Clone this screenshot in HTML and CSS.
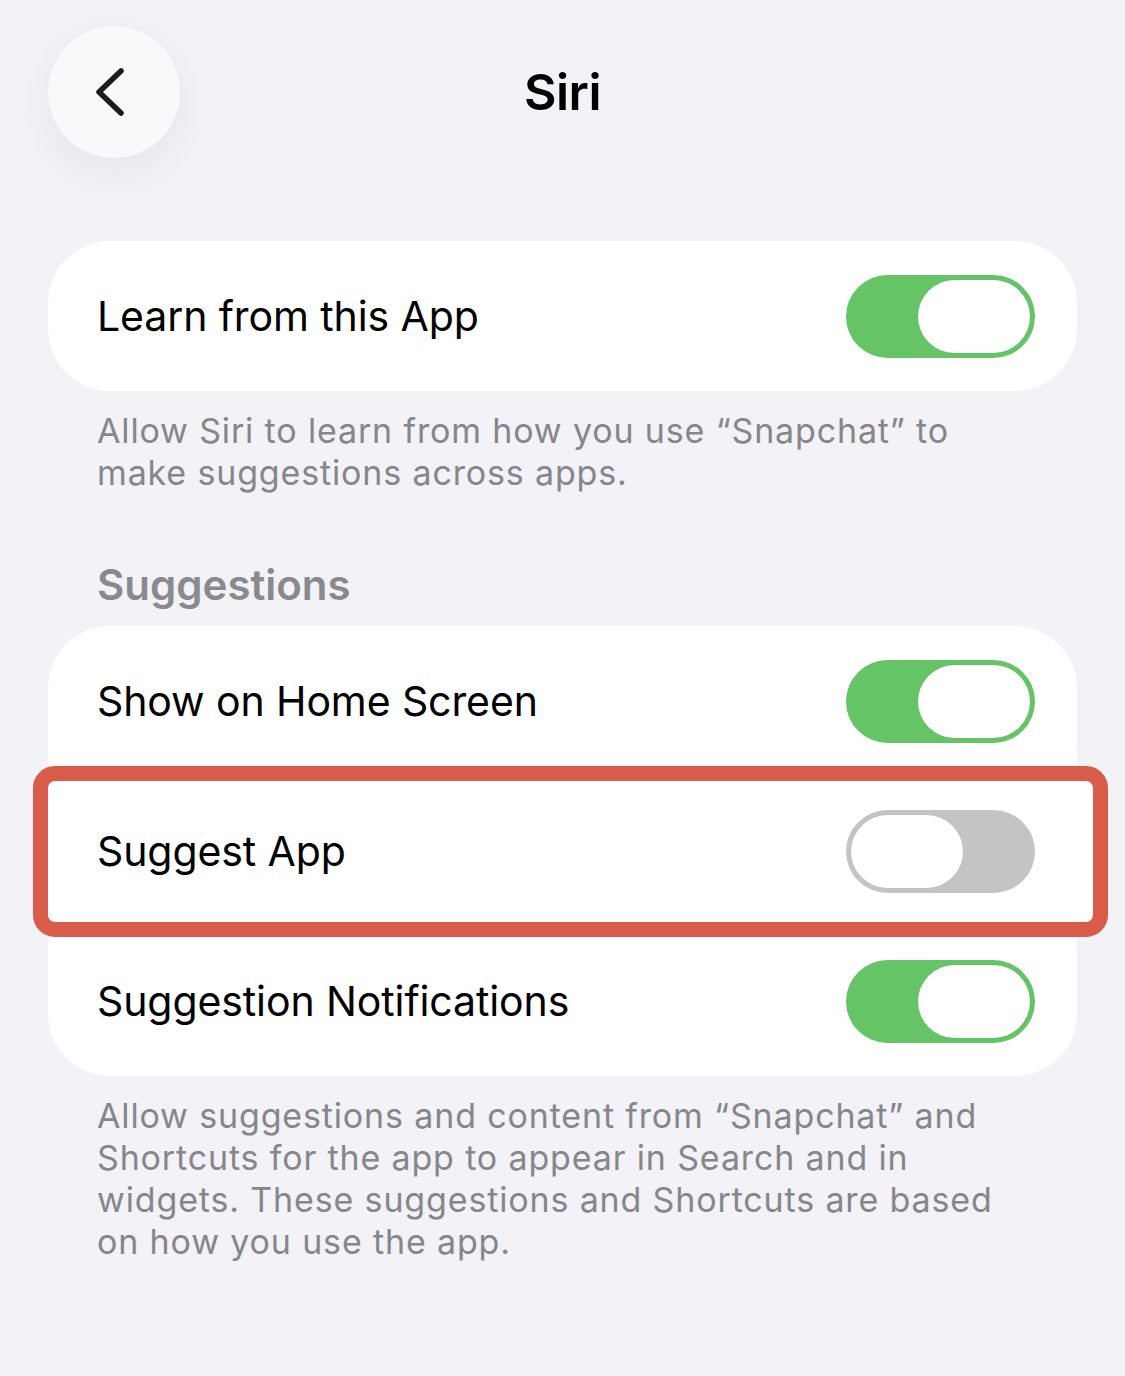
FILE: index.html
```html
<!DOCTYPE html>
<html lang="en">

<head>
  <meta charset="UTF-8">
  <meta name="viewport" content="width=device-width, initial-scale=1.0">
  <title>Siri</title>
  <link rel="stylesheet" href="styles.css">
</head>

<body>
  <div class="page">
    <div class="nav">
      <a class="back" href="javascript:;">
        <svg width="132" height="132" viewBox="0 0 132 132">
          <path d="M73 45 L51 66 L73 87" fill="none" stroke="#1c1c1e" stroke-width="5.5" stroke-linecap="round" stroke-linejoin="round" />
        </svg>
      </a>
      <h1>Siri</h1>
    </div>

    <div class="group">
      <div class="row">
        <span>Learn from this App</span>
        <span class="switch on"><i></i></span>
      </div>
    </div>
    <p class="note">Allow Siri to learn from how you use “Snapchat” to make suggestions across apps.</p>

    <h2>Suggestions</h2>
    <div class="group">
      <div class="row">
        <span>Show on Home Screen</span>
        <span class="switch on"><i></i></span>
      </div>
      <div class="row marked">
        <span>Suggest App</span>
        <span class="switch"><i></i></span>
      </div>
      <div class="row">
        <span>Suggestion Notifications</span>
        <span class="switch on"><i></i></span>
      </div>
    </div>
    <p class="note">Allow suggestions and content from “Snapchat” and Shortcuts for the app to appear in Search and in widgets. These suggestions and Shortcuts are based on how you use the app.</p>
  </div>
</body>

</html>
```

FILE: styles.css
```css
* {
  margin: 0;
  padding: 0;
  box-sizing: border-box;
}

body {
  background: #f2f2f7;
  font-family: Inter, "Noto Sans", sans-serif;
  color: #000;
}

.page {
  width: 1125px;
  min-height: 1376px;
  padding: 26px 48px 0;
}

/* 顶部导航 */
.nav {
  position: relative;
  height: 132px;
  display: flex;
  align-items: center;
  justify-content: center;
}

.nav .back {
  position: absolute;
  left: 0;
  top: 0;
  width: 132px;
  height: 132px;
  border-radius: 50%;
  background: #f9f9fb;
  box-shadow: 0 14px 50px rgba(0, 0, 0, 0.06);
  display: block;
}

.nav .back svg {
  display: block;
}

.nav h1 {
  font-size: 50px;
  font-weight: 600;
  letter-spacing: -0.5px;
}

/* 分组卡片 */
.group {
  background: #fff;
  border-radius: 62px;
}

.nav + .group {
  margin-top: 83px;
}

.row {
  position: relative;
  height: 150px;
  padding: 0 42px 0 49px;
  display: flex;
  align-items: center;
  justify-content: space-between;
  font-size: 41px;
  letter-spacing: -0.1px;
}

.row > span {
  position: relative;
  z-index: 1;
}

/* 红框标注 */
.row.marked::before {
  content: '';
  position: absolute;
  left: -15px;
  right: -31px;
  top: -10px;
  bottom: -11px;
  border: 15px solid #d95b4a;
  border-radius: 22px;
  background: #fff;
}

/* 开关 */
.switch {
  width: 189px;
  height: 83px;
  border-radius: 42px;
  background: #c4c4c6;
  padding: 5px;
  display: flex;
  justify-content: flex-start;
}

.switch.on {
  background: #65c466;
  justify-content: flex-end;
}

.switch i {
  width: 112px;
  height: 73px;
  border-radius: 37px;
  background: #fff;
  box-shadow: 0 0 0 1px rgba(0, 0, 0, 0.02);
}

.note {
  padding: 0 70px 0 49px;
  margin-top: 19px;
  font-size: 34px;
  line-height: 42px;
  color: #86868b;
  letter-spacing: 0.85px;
}

h2 {
  padding-left: 49px;
  margin: 65px 0 15px;
  font-size: 42px;
  line-height: 52px;
  font-weight: 600;
  color: #8a8a8e;
}
```
